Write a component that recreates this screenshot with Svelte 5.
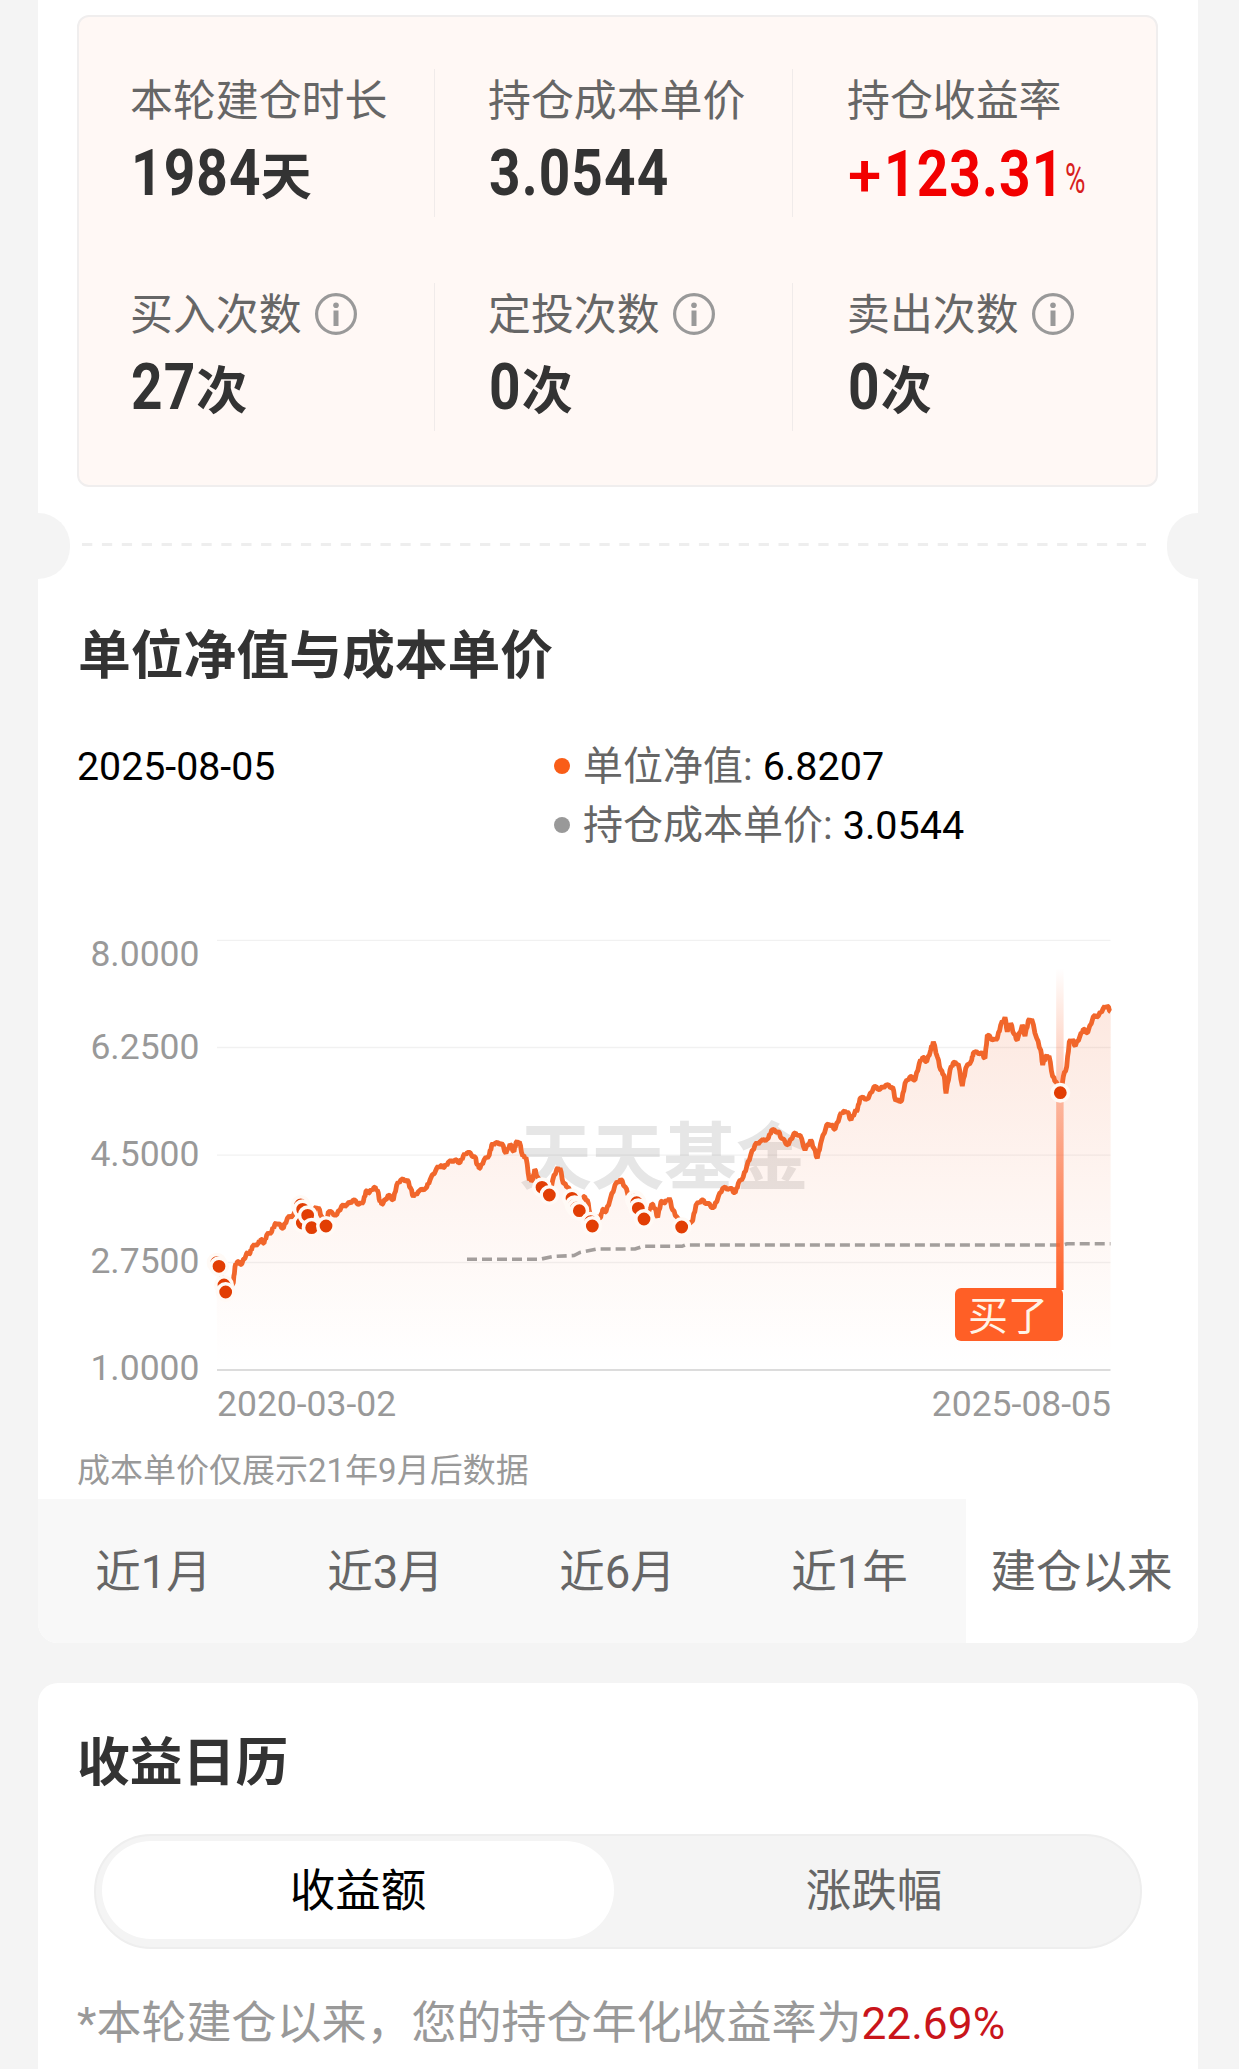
<script>
  const stats = [
    { label: '本轮建仓时长', num: '1984', unit: '天' },
    { label: '持仓成本单价', num: '3.0544' },
    { label: '持仓收益率', sign: '+', num: '123.31', pct: true },
    { label: '买入次数', num: '27', unit: '次', info: true },
    { label: '定投次数', num: '0', unit: '次', info: true },
    { label: '卖出次数', num: '0', unit: '次', info: true }
  ];
  const tabs = ['近1月', '近3月', '近6月', '近1年', '建仓以来'];
  let active = $state(4);
  let mode = $state(0);

  // Each run of samples is stored in thirds of a pixel from its own origin.
  const run = (ox, oy, s) =>
    s.split(' ').map((p) => {
      const [x, y] = p.split(',').map(Number);
      return [ox + x / 3, oy + y / 3];
    });
  const nav = [
    ...run(200, 1080, '50,540 57,560 72,610 77,636 100,608 105,560 112,545 125,553 140,520 150,520 157,500 175,490 183,478 192,490 200,465 215,455 225,432 235,432 250,445 262,415 280,405 300,375 310,385 323,405 335,443 345,385 355,383 365,410 378,438 385,395 410,405 425,378 440,375 460,360 478,373 490,365 498,333 508,338 522,322 532,330 540,365 548,372 565,345 580,360 590,315 602,300 622,300 632,325 640,350 655,335 680,322 690,300 710,265 722,257 733,262 745,247 765,240 780,248 790,228 802,217 825,230 832,255 840,265 852,240 868,225 875,195 885,190 905,190 918,220 930,193 942,215 948,188 958,185 968,228 978,232 988,300'),
    ...run(500, 1080, '98,300 104,268 112,290 126,322 148,345 158,300 170,268 180,265 190,310 205,322 216,353 238,392 250,350 262,360 270,400 277,438 290,412 302,412 308,388 318,395 330,360 345,315 362,298 375,320 388,350 400,345 415,385 432,417 445,400 455,372 465,385 473,412 483,365 495,368 508,355 518,390 530,410 545,440 578,422 588,375 605,360 620,370 642,383 655,350 668,325 690,325 706,338 715,310 730,290 740,260 752,225 765,195 780,185 805,175 815,150 835,155 845,175 865,195 882,160 895,165'),
    ...run(800, 960, '0,525 15,570 32,540 42,565 52,595 62,550 80,495 95,495 105,508 120,465 130,455 142,455 153,480 165,455 172,450 180,415 205,415 222,380 240,388 258,375 278,382 287,422 305,422 315,370 330,350 345,360 358,310 368,292 380,305 392,270 400,245 412,290 422,330 432,345 438,400 450,330 460,308 475,312 487,378 497,325 515,300 520,278 545,278 555,295 562,225 580,240 592,235 602,195 615,172 622,215 632,190 642,222 652,240 667,195 675,228 685,182 695,178 710,235 722,270 728,315 737,290 747,288 758,350 768,365 781,398 790,350 800,320 808,245 818,240 826,258 840,228 850,208 863,218 880,170 895,168 910,145 922,138 932,155')
  ];
  // Small daily swings between the main samples.
  const daily = nav.flatMap((p, i) => {
    const q = nav[i + 1];
    if (!q) return [p];
    return [
      p,
      [p[0] + (q[0] - p[0]) * 0.35, p[1] + (q[1] - p[1]) * 0.35 - 1.3],
      [p[0] + (q[0] - p[0]) * 0.65, p[1] + (q[1] - p[1]) * 0.65 + 1.3]
    ];
  });
  const line = 'M' + daily.map((p) => p.map((n) => n.toFixed(1)).join(' ')).join('L');
  const area = line + 'L1110.5 1370L217 1370Z';
  const cost = 'M467 1259.3H540L553 1256.5L574 1255.5L580 1252.5L597 1249H635L643 1246.3H682L685 1245H1063L1067 1243.8H1110.5';
  const buys = [
    ...run(200, 1080, '50,548 57,559 72,615 77,636 302,375 308,388 307,429 323,406 335,443 378,438'),
    ...run(500, 1080, '126,322 148,345 216,355 224,376 230,384 238,392 272,425 277,438 405,360 410,368 415,385 432,417 545,441'),
    [1060.3, 1092.7]
  ];
  const grid = [940.3, 1047.5, 1155.2, 1262.5];
  const ticks = [
    ['8.0000', 954], ['6.2500', 1046.5], ['4.5000', 1153.5], ['2.7500', 1261], ['1.0000', 1368]
  ];
</script>

<main>
  <section class="card first">
    <div class="stats">
      {#each stats as s}
        <div class="stat">
          <div class="label">
            {s.label}
            {#if s.info}
              <svg class="info" viewBox="0 0 44 44">
                <circle cx="22" cy="22" r="19.4" />
                <circle class="dot" cx="22" cy="13.3" r="2.8" />
                <path d="M22 18.5V34" />
              </svg>
            {/if}
          </div>
          <div class="value" class:red={s.pct}>
            {#if s.sign}<span class="num sign">{s.sign}</span>{/if}<span class="num">{s.num}</span>{#if s.unit}<span class="unit">{s.unit}</span>{/if}{#if s.pct}<span class="pct">%</span>{/if}
          </div>
        </div>
      {/each}
    </div>

    <div class="tear">
      <i class="notch left"></i>
      <svg class="dash" viewBox="0 0 1064 3"><path d="M0 1.5H1064" /></svg>
      <i class="notch right"></i>
    </div>

    <h2>单位净值与成本单价</h2>

    <div class="legend">
      <time>2025-08-05</time>
      <ul>
        <li><i class="bullet orange"></i><span>单位净值:</span><b>6.8207</b></li>
        <li><i class="bullet"></i><span>持仓成本单价:</span><b>3.0544</b></li>
      </ul>
    </div>

    <svg class="chart" viewBox="38 920 1160 510">
      <defs>
        <linearGradient id="fill" gradientUnits="userSpaceOnUse" x1="0" y1="1000" x2="0" y2="1365">
          <stop offset="0" stop-color="#f0642d" stop-opacity=".15" />
          <stop offset=".5" stop-color="#f0642d" stop-opacity=".07" />
          <stop offset="1" stop-color="#f0642d" stop-opacity="0" />
        </linearGradient>
        <linearGradient id="beam" gradientUnits="userSpaceOnUse" x1="0" y1="968" x2="0" y2="1290">
          <stop offset="0" stop-color="#ff5f26" stop-opacity="0" />
          <stop offset=".4" stop-color="#fb6a38" stop-opacity=".42" />
          <stop offset="1" stop-color="#ff5f26" stop-opacity="1" />
        </linearGradient>
      </defs>
      <text class="mark" x="519" y="1183" textLength="290">天天基金</text>
      {#each grid as y}
        <path class="grid" d="M217 {y}H1110.5" />
      {/each}
      <path d={area} fill="url(#fill)" />
      <path class="axis" d="M217 1370H1110.5" />
      <path class="cost" d={cost} />
      <path class="nav" d={line} />
      <rect x="1056.2" y="968" width="7.4" height="322" fill="url(#beam)" />
      {#each buys as [x, y]}
        <circle class="buy" cx={x} cy={y} r="8.2" />
      {/each}
      <rect x="955" y="1288" width="108" height="53" rx="6" fill="#ff5f26" />
      <text class="flag" x="1008" y="1329.5">买了</text>
      {#each ticks as [t, y]}
        <text class="tick" x="199.5" y={y + 12.2} text-anchor="end">{t}</text>
      {/each}
      <text class="tick" x="217" y="1416">2020-03-02</text>
      <text class="tick" x="1111" y="1416" text-anchor="end">2025-08-05</text>
    </svg>

    <p class="note">成本单价仅展示21年9月后数据</p>

    <nav>
      {#each tabs as t, i}
        <button class:on={active === i} onclick={() => (active = i)}>{t}</button>
      {/each}
    </nav>
  </section>

  <section class="card second">
    <h2>收益日历</h2>
    <div class="toggle">
      <button class:on={mode === 0} onclick={() => (mode = 0)}>收益额</button>
      <button class:on={mode === 1} onclick={() => (mode = 1)}>涨跌幅</button>
    </div>
    <p class="foot">*本轮建仓以来，您的持仓年化收益率为<em>22.69%</em></p>
  </section>
</main>

<style>
  :global(body) { background: #f4f4f4; }
  main {
    box-sizing: border-box;
    width: 1239px;
    height: 2069px;
    padding: 0 41px 0 38px;
    overflow: hidden;
    background: #f4f4f4;
    font-family: Roboto, 'Noto Sans CJK SC', sans-serif;
    color: #333;
  }
  h2, p, ul { margin: 0; padding: 0; font-weight: 400; }
  button { padding: 0; border: 0; background: none; font: inherit; color: #666; }
  .card { background: #fff; overflow: hidden; }
  .first { height: 1643px; border-radius: 0 0 20px 20px; display: flex; flex-direction: column; }
  .stats {
    box-sizing: border-box;
    width: 1081px;
    height: 472px;
    margin: 15px 0 0 39px;
    padding-top: 52px;
    flex: none;
    display: grid;
    grid-template-columns: 356px 358px 1fr;
    grid-auto-rows: 148px;
    row-gap: 66px;
    background: #fff8f5;
    border: 2px solid #f0eeee;
    border-radius: 12px;
  }
  .stat { padding-left: 53px; border-right: 1px solid #f0ebea; white-space: nowrap; }
  .stat:nth-child(3n + 1) { padding-left: 51px; }
  .stat:nth-child(3n) { padding-left: 54px; border-right: 0; }
  .label { display: flex; align-items: center; height: 62px; padding-top: 1px; font-size: 42.9px; line-height: 62px; color: #666; }
  .info { width: 44px; height: 44px; margin: -2px 0 0 12.5px; fill: none; stroke: #999; stroke-width: 3.2; }
  .info path { stroke-width: 5; }
  .info .dot { fill: #999; stroke: none; }
  .value { display: flex; align-items: baseline; height: 84px; padding: 2px 0 0 1px; line-height: 84px; font-weight: 700; }
  .num { font-size: 55px; letter-spacing: 1.1px; transform: scaleY(1.165); transform-origin: 0 72.4%; }
  .sign { width: 36px; font-size: 60px; font-weight: 500; letter-spacing: 0; transform: none; }
  .unit { font-size: 51px; margin-left: -1px; }
  .stat:nth-child(n + 4) .unit { margin-left: 0; }
  .red { color: #f20000; }
  .pct { width: 28px; font-size: 43px; font-weight: 400; margin-left: 1px; color: #d81e1e; transform: translateY(-3px) scaleX(.65); transform-origin: left; }
  .tear { display: flex; align-items: center; justify-content: space-between; height: 66px; margin-top: 26px; flex: none; }
  .notch { width: 32px; height: 66px; background: #f4f4f4; }
  .left { border-radius: 0 33px 33px 0; }
  .right { width: 31px; border-radius: 33px 0 0 33px; }
  .dash { width: 1064px; height: 3px; margin: -3px 9px 0 0; stroke: #eee; stroke-width: 3; stroke-dasharray: 10.3 9.6; }
  h2 { font-size: 52.8px; line-height: 76px; font-weight: 700; color: #333; margin-left: 40px; white-space: nowrap; }
  .first h2 { margin-top: 39px; flex: none; }
  .legend { display: flex; height: 183px; margin-top: 43px; flex: none; font-size: 39.3px; line-height: 60px; color: #000; }
  time { width: 476px; padding-left: 39px; box-sizing: border-box; margin-right: 40px; }
  ul { list-style: none; }
  li { display: flex; align-items: center; height: 59px; color: #666; font-size: 40px; }
  .bullet { width: 16px; height: 16px; margin: -2px 13px 0 0; border-radius: 50%; background: #999; }
  .orange { background: #f95d17; }
  li b { margin-left: 10px; font-weight: 400; font-size: 39.5px; color: #000; }
  .chart { width: 1160px; height: 510px; flex: none; display: block; }
  .grid { stroke: #000; stroke-opacity: .055; stroke-width: 1.3; }
  .axis { stroke: #dcdcdc; stroke-width: 2; }
  .cost { fill: none; stroke: #a39e9c; stroke-width: 3.6; stroke-dasharray: 10 5; }
  .nav { fill: none; stroke: #f1662b; stroke-width: 4.8; stroke-linejoin: bevel; }
  .buy { fill: #e23e04; stroke: #fffaf6; stroke-width: 3.6; }
  .mark { font-size: 73px; font-weight: 700; fill: #e6e6e6; }
  .flag { font-size: 40px; fill: #fff4e8; text-anchor: middle; }
  .tick { font-size: 35.5px; fill: #999; }
  .note { box-sizing: border-box; height: 69px; padding: 2px 0 0 39px; flex: none; font-size: 33px; line-height: 78px; color: #999; }
  nav { display: grid; grid-template-columns: repeat(5, 1fr); height: 144px; flex: none; background: #f8f8f8; }
  nav button { padding: 4px 1px 0 0; font-size: 45.5px; line-height: 140px; }
  nav .on { background: #fff; }
  .second { height: 386px; margin-top: 40px; border-radius: 20px 20px 0 0; }
  .second h2 { padding-top: 42px; margin-left: 39px; }
  .toggle {
    box-sizing: border-box;
    display: grid;
    grid-template-columns: 512px 1fr;
    width: 1048px;
    height: 115px;
    margin: 33px 0 0 56px;
    padding: 5px 6px 8px;
    background: #f4f4f4;
    border: 2px solid #eee;
    border-radius: 58px;
  }
  .toggle button { padding-top: 3px; font-size: 45.5px; line-height: 95px; border-radius: 50px; }
  .toggle .on { background: #fff; color: #000; }
  .foot { margin: 42px 0 0 39px; font-size: 45px; line-height: 66px; color: #999; white-space: nowrap; }
  em { font-style: normal; font-size: 44.3px; color: #c9151b; }
</style>
